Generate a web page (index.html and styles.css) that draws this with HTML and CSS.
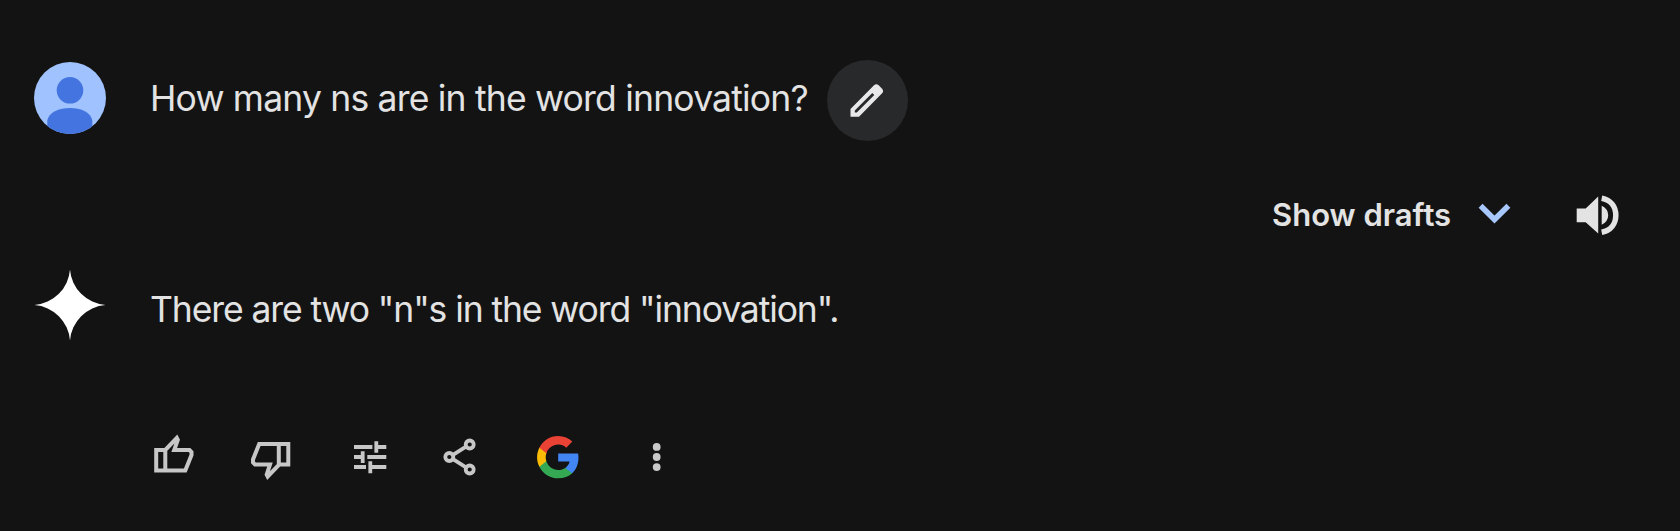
FILE: index.html
```html
<!DOCTYPE html>
<html lang="en">
<head>
<meta charset="utf-8">
<title>Chat</title>
<link rel="stylesheet" href="styles.css">
</head>
<body>
<main class="chat">
  <section class="row prompt">
    <svg class="avatar" viewBox="34 62 72 72">
      <defs><clipPath id="disc"><circle cx="70" cy="98" r="36"/></clipPath></defs>
      <circle cx="70" cy="98" r="36" fill="#a0c3ff"/>
      <g clip-path="url(#disc)" fill="#4374e0">
        <circle cx="70" cy="90.3" r="13.3"/>
        <path d="M47.3 140V120.500C48.500 112.500 59 108 70 108S91.100 112.500 92.300 120.500V140Z"/>
      </g>
    </svg>
    <p class="text question">How many ns are in the word innovation?</p>
    <button class="edit" aria-label="Edit">
      <svg viewBox="827.500 60 81 81"><path fill="#e8e8ea" fill-rule="evenodd" d="M851 116.700V109L874.500 85.300Q876.800 83.200 879.200 85.300L882.600 88.700Q884.600 91 882.600 93.200L859.500 116.700ZM855.300 112.400H857.300L874.800 94.900L872.800 92.900L855.300 110.400Z"/></svg>
    </button>
  </section>
  <section class="row toolbar">
    <button class="drafts"><span class="label">Show drafts</span>
      <svg class="chevron" viewBox="1478 203 33 22"><path d="M1480.600 205.800L1494.500 219.500L1508.400 205.800" fill="none" stroke="#a8c7fa" stroke-width="5.600"/></svg>
    </button>
    <svg class="speaker" viewBox="1575 193 46 46">
      <path fill="#e3e3e3" d="M1576.700 208.500H1585.700L1598.200 196.500V233.500L1585.700 222.300H1576.700ZM1601.700 205.800Q1608.200 209 1608.200 215.300T1601.700 224.800Z"/>
      <path fill="none" stroke="#e3e3e3" stroke-width="5.500" d="M1601.700 198.200C1611 200 1615.800 207 1615.800 215.300S1611 230.500 1601.700 232.300"/>
    </svg>
  </section>
  <section class="row answer">
    <svg class="avatar" viewBox="34 269 72 72"><path fill="#fff" d="M70 269.500A38.500 38.500 0 0 0 105.500 305A38.500 38.500 0 0 0 70 340.500A38.500 38.500 0 0 0 34.500 305A38.500 38.500 0 0 0 70 269.500Z"/></svg>
    <p class="text reply">There are two "n"s in the word "innovation".</p>
  </section>
  <section class="actions">
    <svg class="icon" viewBox="150 434 48 48"><path class="line" d="M156.200 450H165.300L176.800 438L177.800 440L174.200 450H189.500L191.500 452V455L185.300 470.500H156.200ZM165.300 450V470.500"/></svg>
    <svg class="icon down" viewBox="247 434 48 48"><path class="line" d="M288.300 464.500H279.200L267.700 476.500L266.700 474.500L270 464.500H255L253 462.500V459.500L259.200 444H288.300ZM278.800 444V464.500"/></svg>
    <svg class="icon tune" viewBox="346 434 48 48"><path class="line thin" d="M354 447H372.400M376.300 441.300V452.700M376.300 447H386.300M354 457H362.700M362.700 451.300V463M367.300 457H386.300M354 467H366M370.300 461.300V473.300M370.300 467H386.300"/></svg>
    <svg class="icon share" viewBox="436 434 48 48"><path class="line thin" d="M453 454.800L466 446.700M453 459.200L466 467.300"/><g class="line thin"><circle cx="469.700" cy="444.500" r="4"/><circle cx="469.700" cy="469.500" r="4"/><circle cx="449.300" cy="457" r="4"/></g></svg>
    <svg class="icon google" viewBox="-.6 -.1 25 25">
      <path fill="#4285f4" d="M22.560 12.250c0-.78-.07-1.530-.2-2.250H12v4.260h5.920c-.26 1.370-1.040 2.530-2.210 3.310v2.770h3.570c2.080-1.920 3.280-4.740 3.280-8.090z"/>
      <path fill="#34a853" d="M12 23c2.970 0 5.460-.98 7.280-2.660l-3.570-2.770c-.98.66-2.230 1.060-3.710 1.060-2.860 0-5.290-1.930-6.160-4.530H2.180v2.840C3.990 20.530 7.700 23 12 23z"/>
      <path fill="#fbbc05" d="M5.840 14.100c-.22-.66-.35-1.360-.35-2.100s.13-1.440.35-2.100V7.060H2.180C1.430 8.550 1 10.220 1 12s.43 3.450 1.180 4.940l3.660-2.840z"/>
      <path fill="#ea4335" d="M12 5.380c1.620 0 3.060.56 4.210 1.640l3.150-3.150C17.450 2.090 14.970 1 12 1 7.700 1 3.990 3.470 2.180 7.060l3.660 2.840c.87-2.600 3.300-4.520 6.160-4.520z"/>
    </svg>
    <svg class="icon more" viewBox="633 434 48 48" fill="#c9c9c9"><circle cx="656.700" cy="446.900" r="3.900"/><circle cx="656.700" cy="457" r="3.900"/><circle cx="656.700" cy="467.100" r="3.900"/></svg>
  </section>
</main>
</body>
</html>
```
FILE: styles.css
```css
body { margin: 0; background: #131313; color: #e3e3e3; font-family: Inter, "Liberation Sans", sans-serif; }
svg { display: block; flex: none; }
button { border: 0; padding: 0; background: none; color: inherit; font: inherit; }
.chat { box-sizing: border-box; height: 531px; padding: 60px 59px 0 34px; overflow: hidden; }
.row { display: flex; align-items: center; }
.prompt { height: 81px; }
.avatar { width: 72px; height: 72px; margin-right: 44px; }
.prompt .avatar { margin-top: -5px; }
.text { margin: 0; font-size: 35.5px; line-height: 48px; white-space: nowrap; }
.question { width: 677px; letter-spacing: -.8px; margin-top: -3px; }
.edit { width: 81px; height: 81px; border-radius: 50%; background: #28292b; }
.edit svg { width: 81px; height: 81px; }
.toolbar { height: 46px; margin-top: 52px; justify-content: flex-end; gap: 64px; }
.drafts { display: flex; align-items: center; justify-content: space-between; width: 239px; margin-top: -2px; }
.label { font-size: 31px; font-weight: 600; letter-spacing: 0; line-height: 40px; white-space: nowrap; }
.chevron { width: 33px; height: 22px; margin-top: -2px; }
.speaker { width: 46px; height: 46px; }
.answer { height: 72px; margin-top: 30px; }
.reply { margin-top: 9px; letter-spacing: -1.1px; }
.actions { display: flex; padding: 93px 0 0 116px; }
.icon { width: 48px; height: 48px; }
.line { fill: none; stroke: #c7c7c7; stroke-width: 4; }
.thin { stroke-width: 3.8; }
.down { margin-left: 49px; }
.tune { margin-left: 51px; }
.share { margin-left: 42px; }
.google { margin-left: 50px; }
.more { margin-left: 51px; }
```
